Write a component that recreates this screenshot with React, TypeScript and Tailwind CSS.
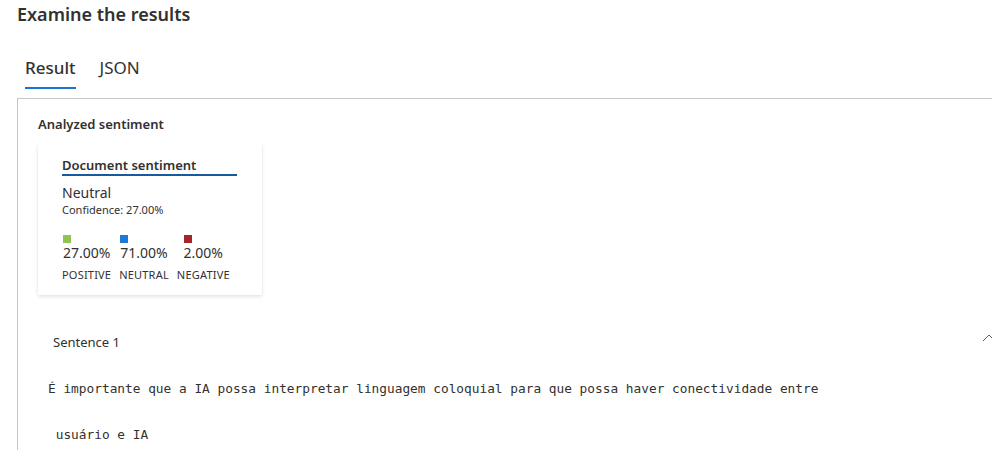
import React from "react";

function Stat({ color, value, label }: { color: string; value: string; label: string }) {
  return (
    <div className="flex flex-col items-center">
      <div className="flex flex-col items-start">
        <div className="w-[8px] h-[8px]" style={{ backgroundColor: color }} />
        <div className="text-[14px] leading-[18px] mt-[1px]">{value}</div>
      </div>
      <div className="text-[11px] leading-[14px] mt-[6px] tracking-[0.2px] text-[#323130]">{label}</div>
    </div>
  );
}

export default function App() {
  return (
    <div className="w-[992px] h-[450px] overflow-hidden bg-white text-[#323130] font-['Segoe_UI','Noto_Sans',sans-serif]">
      <div className="w-[1020px]">
        <div className="pl-[17px] pt-[2px] text-[18px] leading-[24px] font-semibold">Examine the results</div>
        <div className="pl-[25px] mt-[30px] flex gap-[24px]">
          <div className="flex flex-col">
            <div className="text-[17px] leading-[24px] font-medium">Result</div>
            <div className="mt-[7px] h-[2px] bg-[#1a73d0]" />
          </div>
          <div className="text-[17px] leading-[24px] text-[#323130]">JSON</div>
        </div>
        <div className="ml-[17px] mt-[9px] w-[1000px] h-[400px] border-l border-t border-[#c8c6c4]">
          <div className="pl-[20px] pt-[16px] text-[13px] leading-[18px] font-semibold">Analyzed sentiment</div>
          <div className="ml-[20px] mt-[10px] w-[224px] h-[152px] bg-white shadow-[0_1.6px_3.6px_rgba(0,0,0,0.13),0_0.3px_0.9px_rgba(0,0,0,0.11)] pl-[24px] pt-[13px]">
            <div className="w-[175px] border-b-2 border-[#185a9d] text-[13px] leading-[18px] font-semibold">Document sentiment</div>
            <div className="mt-[7px] text-[14px] leading-[20px]">Neutral</div>
            <div className="text-[11px] leading-[14px]">Confidence: 27.00%</div>
            <div className="mt-[18px] flex gap-[8px]">
              <Stat color="#92c353" value="27.00%" label="POSITIVE" />
              <Stat color="#1e7ad6" value="71.00%" label="NEUTRAL" />
              <Stat color="#a4262c" value="2.00%" label="NEGATIVE" />
            </div>
          </div>
          <div className="mt-[38px] flex items-center justify-between pl-[35px] pr-[21px]">
            <div className="text-[13px] leading-[18px]">Sentence 1</div>
            <svg width="14" height="8" viewBox="0 0 14 8" className="mt-[-8px]">
              <path d="M1 7 L7 1 L13 7" fill="none" stroke="#605e5c" strokeWidth="1" />
            </svg>
          </div>
          <div className="pl-[30px] mt-[29px] font-['DejaVu_Sans_Mono','Liberation_Mono',monospace] text-[12.8px] leading-[18px] whitespace-pre text-[#323130]">
            <div>É importante que a IA possa interpretar linguagem coloquial para que possa haver conectividade entre</div>
            <div className="mt-[28px]"> usuário e IA</div>
          </div>
        </div>
      </div>
    </div>
  );
}
